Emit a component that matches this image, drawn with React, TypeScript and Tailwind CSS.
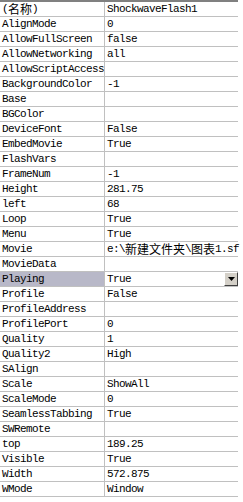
import React from 'react';

type Prop = { name: string; value: React.ReactNode; selected?: boolean };

const cjk = (s: string) => (
  <span className="text-[12px] leading-none tracking-normal [font-family:'Noto_Sans_CJK_SC',sans-serif]">{s}</span>
);

const props: Prop[] = [
  { name: '(名称)', value: 'ShockwaveFlash1' },
  { name: 'AlignMode', value: '0' },
  { name: 'AllowFullScreen', value: 'false' },
  { name: 'AllowNetworking', value: 'all' },
  { name: 'AllowScriptAccess', value: '' },
  { name: 'BackgroundColor', value: '-1' },
  { name: 'Base', value: '' },
  { name: 'BGColor', value: '' },
  { name: 'DeviceFont', value: 'False' },
  { name: 'EmbedMovie', value: 'True' },
  { name: 'FlashVars', value: '' },
  { name: 'FrameNum', value: '-1' },
  { name: 'Height', value: '281.75' },
  { name: 'left', value: '68' },
  { name: 'Loop', value: 'True' },
  { name: 'Menu', value: 'True' },
  {
    name: 'Movie',
    value: (
      <>
        e:\{cjk('新建文件夹')}\{cjk('图表')}1.sf
      </>
    ),
  },
  { name: 'MovieData', value: '' },
  { name: 'Playing', value: 'True', selected: true },
  { name: 'Profile', value: 'False' },
  { name: 'ProfileAddress', value: '' },
  { name: 'ProfilePort', value: '0' },
  { name: 'Quality', value: '1' },
  { name: 'Quality2', value: 'High' },
  { name: 'SAlign', value: '' },
  { name: 'Scale', value: 'ShowAll' },
  { name: 'ScaleMode', value: '0' },
  { name: 'SeamlessTabbing', value: 'True' },
  { name: 'SWRemote', value: '' },
  { name: 'top', value: '189.25' },
  { name: 'Visible', value: 'True' },
  { name: 'Width', value: '572.875' },
  { name: 'WMode', value: 'Window' },
];

export default function App() {
  return (
    <div className="w-[243px] h-[502px] bg-white overflow-hidden text-black text-[11px] leading-none tracking-[-0.6px] [font-family:'Liberation_Mono','Noto_Sans_CJK_SC',monospace]">
      <div className="w-[238px] border-t-2 border-[#808080]">
        {props.map((p) => (
          <div key={p.name} className="flex h-[15px] border-b border-[#c0c0c0]">
            <div
              className={`w-[105px] shrink-0 border-r border-[#c0c0c0] pl-[2px] flex items-center whitespace-nowrap overflow-hidden ${p.selected ? 'bg-[#b8b8c8]' : ''}`}
            >
              {p.name === '(名称)' ? <>({cjk('名称')})</> : p.name}
            </div>
            <div className="flex-1 flex items-center pl-[2px] whitespace-nowrap relative">
              {p.value}
              {p.selected && (
                <div className="absolute right-0 top-0 w-[14px] h-[14px] bg-[#d4d0c8] border border-t-white border-l-white border-r-[#404040] border-b-[#404040] flex items-center justify-center">
                  <svg width="7" height="4" viewBox="0 0 7 4">
                    <path d="M0 0h7L3.5 4z" fill="#000" />
                  </svg>
                </div>
              )}
            </div>
          </div>
        ))}
      </div>
    </div>
  );
}
